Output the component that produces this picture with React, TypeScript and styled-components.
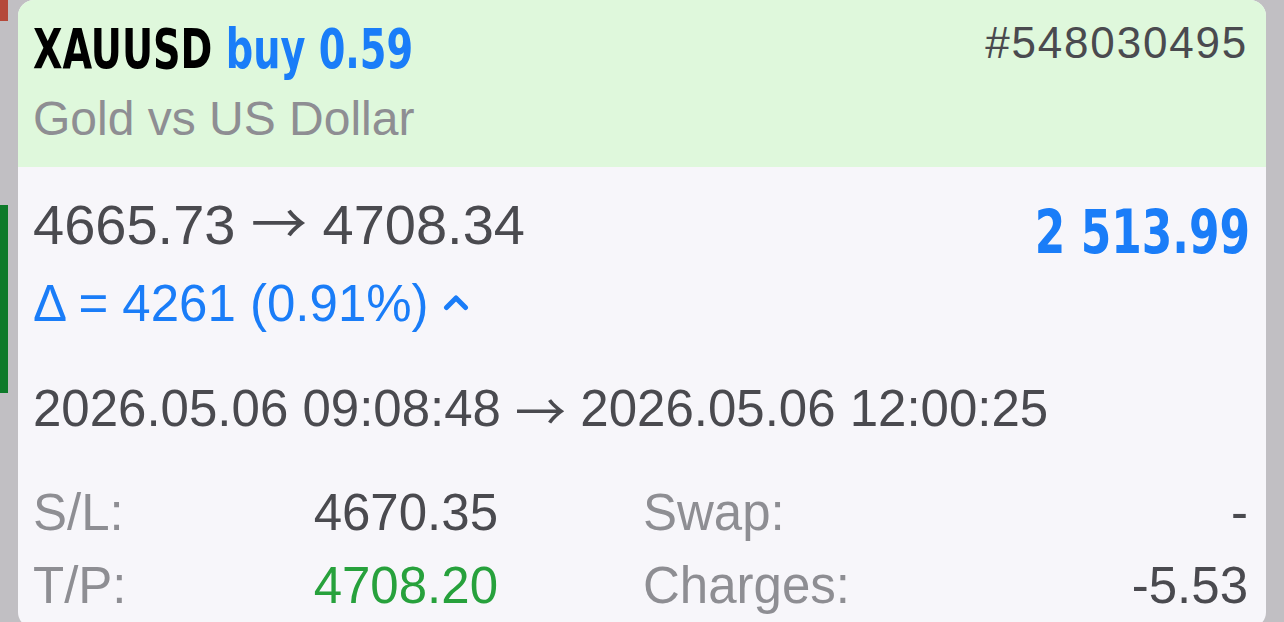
import React from "react";
import styled, { createGlobalStyle } from "styled-components";

const Global = createGlobalStyle`
  html, body { margin: 0; padding: 0; overflow: hidden; }
  body { background: #c1bfc3; font-family: "Liberation Sans", Arial, sans-serif; }
`;

const Page = styled.div`
  display: flex;
  width: 1284px;
  height: 622px;
  overflow: hidden;
  background: #c1bfc3;
`;

const Gutter = styled.div`
  width: 18px;
  flex: none;
  display: flex;
  flex-direction: column;
`;

const Marker = styled.div<{ $color: string; $h: number; $mt: number }>`
  width: 8px;
  height: ${(p) => p.$h}px;
  margin-top: ${(p) => p.$mt}px;
  background: ${(p) => p.$color};
`;

const Card = styled.div`
  flex: 1;
  height: 628px;
  border-radius: 16px;
  overflow: hidden;
  background: #f7f6fa;
  display: flex;
  flex-direction: column;
`;

const Header = styled.div`
  height: 167px;
  box-sizing: border-box;
  background: #dff8dc;
  padding: 11px 18px 0 15px;
  display: flex;
  justify-content: space-between;
  align-items: flex-start;
`;

const TitleCol = styled.div`
  display: flex;
  flex-direction: column;
`;

const Condensed = styled.div<{ $origin: string; $scale: number }>`
  font-family: "DejaVu Sans Condensed", "DejaVu Sans", sans-serif;
  font-weight: 700;
  white-space: nowrap;
  transform: scaleX(${(p) => p.$scale});
  transform-origin: ${(p) => p.$origin} center;
`;

const Title = styled(Condensed)`
  font-size: 56px;
  line-height: 75px;
  color: #000;
`;

const Blue = styled.span`
  color: #1a7df8;
`;

const Subtitle = styled.div`
  font-size: 48px;
  line-height: 60px;
  margin-top: 3px;
  color: #8e8e93;
  white-space: nowrap;
`;

const Ticket = styled.div`
  font-size: 44px;
  line-height: 60px;
  letter-spacing: 1.8px;
  color: #4a4a4f;
  margin-top: 2px;
`;

const Body = styled.div`
  padding: 25px 18px 0 15px;
  display: flex;
  flex-direction: column;
`;

const PriceRow = styled.div`
  display: flex;
  justify-content: space-between;
  align-items: flex-start;
  height: 66px;
`;

const Prices = styled.div`
  font-size: 56px;
  line-height: 66px;
  color: #4a4a4f;
  white-space: nowrap;
`;

const Arrow = styled.span`
  font-family: "Noto Sans CJK JP", "DejaVu Sans", sans-serif;
  font-weight: 400;
  line-height: 0;
`;

const Profit = styled(Condensed)`
  font-size: 61px;
  line-height: 52px;
  color: #1a7df8;
  margin-top: 14px;
  margin-right: -2px;
`;

const Line = styled.div<{ $mt: number; $color?: string }>`
  font-size: 51px;
  line-height: 66px;
  margin-top: ${(p) => p.$mt}px;
  color: ${(p) => p.$color ?? "#4a4a4f"};
  white-space: nowrap;
  display: flex;
  align-items: center;
`;

const Caret = styled.svg`
  margin-left: 14px;
  margin-top: -4px;
`;

const Grid = styled.div`
  display: grid;
  grid-template-columns: 465px 1fr;
  column-gap: 145px;
  row-gap: 7px;
  margin-top: 38px;
`;

const Cell = styled.div`
  display: flex;
  justify-content: space-between;
  font-size: 51px;
  line-height: 66px;
  white-space: nowrap;
`;

const Label = styled.span`
  color: #8e8e93;
`;

const Value = styled.span<{ $color?: string }>`
  color: ${(p) => p.$color ?? "#4a4a4f"};
`;

const fields = [
  { label: "S/L:", value: "4670.35" },
  { label: "Swap:", value: "-" },
  { label: "T/P:", value: "4708.20", color: "#27a13c" },
  { label: "Charges:", value: "-5.53" },
];

export default function App() {
  return (
    <Page>
      <Global />
      <Gutter>
        <Marker $color="#b5483a" $h={21} $mt={0} />
        <Marker $color="#0e7a2a" $h={188} $mt={184} />
      </Gutter>
      <Card>
        <Header>
          <TitleCol>
            <Title $origin="left" $scale={0.76}>
              XAUUSD <Blue>buy 0.59</Blue>
            </Title>
            <Subtitle>Gold vs US Dollar</Subtitle>
          </TitleCol>
          <Ticket>#548030495</Ticket>
        </Header>
        <Body>
          <PriceRow>
            <Prices>
              4665.73 <Arrow>→</Arrow> 4708.34
            </Prices>
            <Profit $origin="right" $scale={0.8}>
              2 513.99
            </Profit>
          </PriceRow>
          <Line $mt={13} $color="#1a7df8">
            Δ = 4261 (0.91%)
            <Caret width="26" height="18" viewBox="0 0 26 18">
              <polyline
                points="3.5,14.5 13,5 22.5,14.5"
                fill="none"
                stroke="#1a7df8"
                strokeWidth="5"
                strokeLinecap="round"
                strokeLinejoin="round"
              />
            </Caret>
          </Line>
          <Line $mt={39}>
            2026.05.06 09:08:48&nbsp;<Arrow>→</Arrow>&nbsp;2026.05.06 12:00:25
          </Line>
          <Grid>
            {fields.map((f) => (
              <Cell key={f.label}>
                <Label>{f.label}</Label>
                <Value $color={f.color}>{f.value}</Value>
              </Cell>
            ))}
          </Grid>
        </Body>
      </Card>
      <Gutter />
    </Page>
  );
}
